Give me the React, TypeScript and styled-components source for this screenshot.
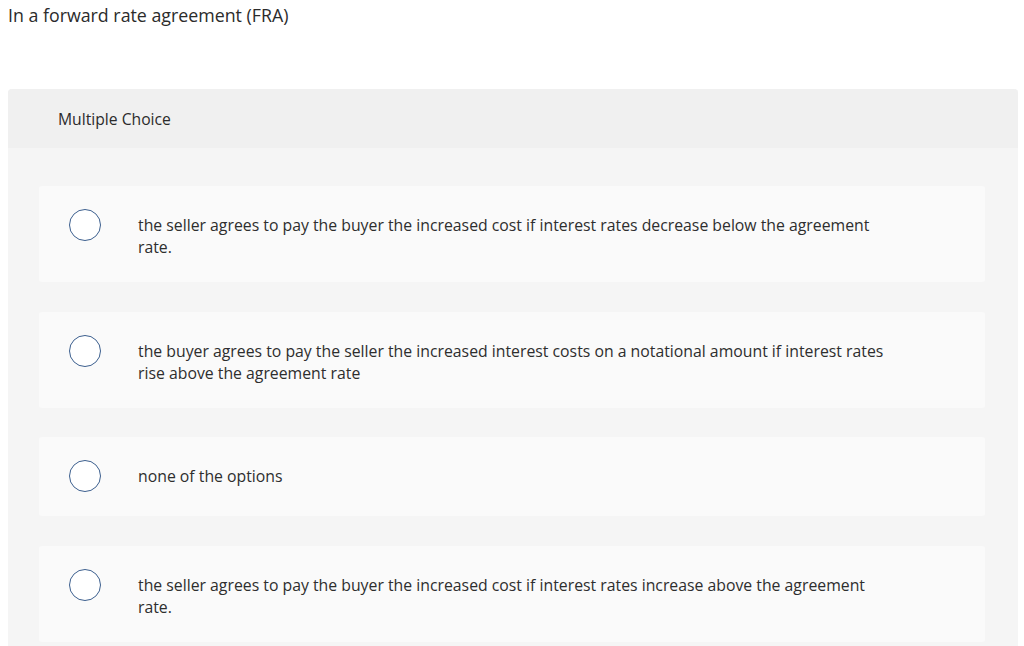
import styled, { createGlobalStyle } from 'styled-components'

const GlobalStyle = createGlobalStyle`
   html, body {
      margin: 0;
      padding: 0;
      background: #ffffff;
   }
   body {
      font-family: 'Open Sans', 'Liberation Sans', sans-serif;
      color: #333333;
   }
`

const Page = styled.main`
   width: 1024px;
   height: 646px;
   overflow: hidden;
`

const Question = styled.h1`
   margin: 0;
   padding-left: 8px;
   height: 30px;
   line-height: 30px;
   font-size: 17.8px;
   font-weight: 400;
   color: #2b2b2b;
`

const Panel = styled.section`
   margin: 59px 6px 0 8px;
   border-radius: 4px;
   overflow: hidden;
   background: #f5f5f5;
`

const PanelHeader = styled.header`
   height: 59px;
   display: flex;
   align-items: center;
   padding-left: 50px;
   background: #f0f0f0;
   font-size: 15.7px;
   color: #2b2b2b;
`

const Choices = styled.div`
   display: flex;
   flex-direction: column;
   gap: 29.5px;
   padding: 38px 33px 30px 31px;
`

const Choice = styled.label`
   display: flex;
   align-items: flex-start;
   padding: 23px 20px 24px 30px;
   background: #fafafa;
   border-radius: 3px;
   cursor: pointer;
`

const Radio = styled.span`
   flex: none;
   width: 32px;
   height: 32px;
   box-sizing: border-box;
   border-radius: 50%;
   border: 1.5px solid #3c5f8e;
   background: #ffffff;
`

const ChoiceText = styled.span`
   padding-top: 5px;
   margin-left: 37px;
   max-width: 750px;
   font-size: 15.8px;
   line-height: 22px;
   color: #2e2e2e;
`

const options = [
   'the seller agrees to pay the buyer the increased cost if interest rates decrease below the agreement rate.',
   'the buyer agrees to pay the seller the increased interest costs on a notational amount if interest rates rise above the agreement rate',
   'none of the options',
   'the seller agrees to pay the buyer the increased cost if interest rates increase above the agreement rate.',
]

const App = () => {
   return (
      <>
         <GlobalStyle />
         <Page>
            <Question>In a forward rate agreement (FRA)</Question>
            <Panel>
               <PanelHeader>Multiple Choice</PanelHeader>
               <Choices>
                  {options.map((text) => (
                     <Choice key={text}>
                        <Radio />
                        <ChoiceText>{text}</ChoiceText>
                     </Choice>
                  ))}
               </Choices>
            </Panel>
         </Page>
      </>
   )
}

export default App
